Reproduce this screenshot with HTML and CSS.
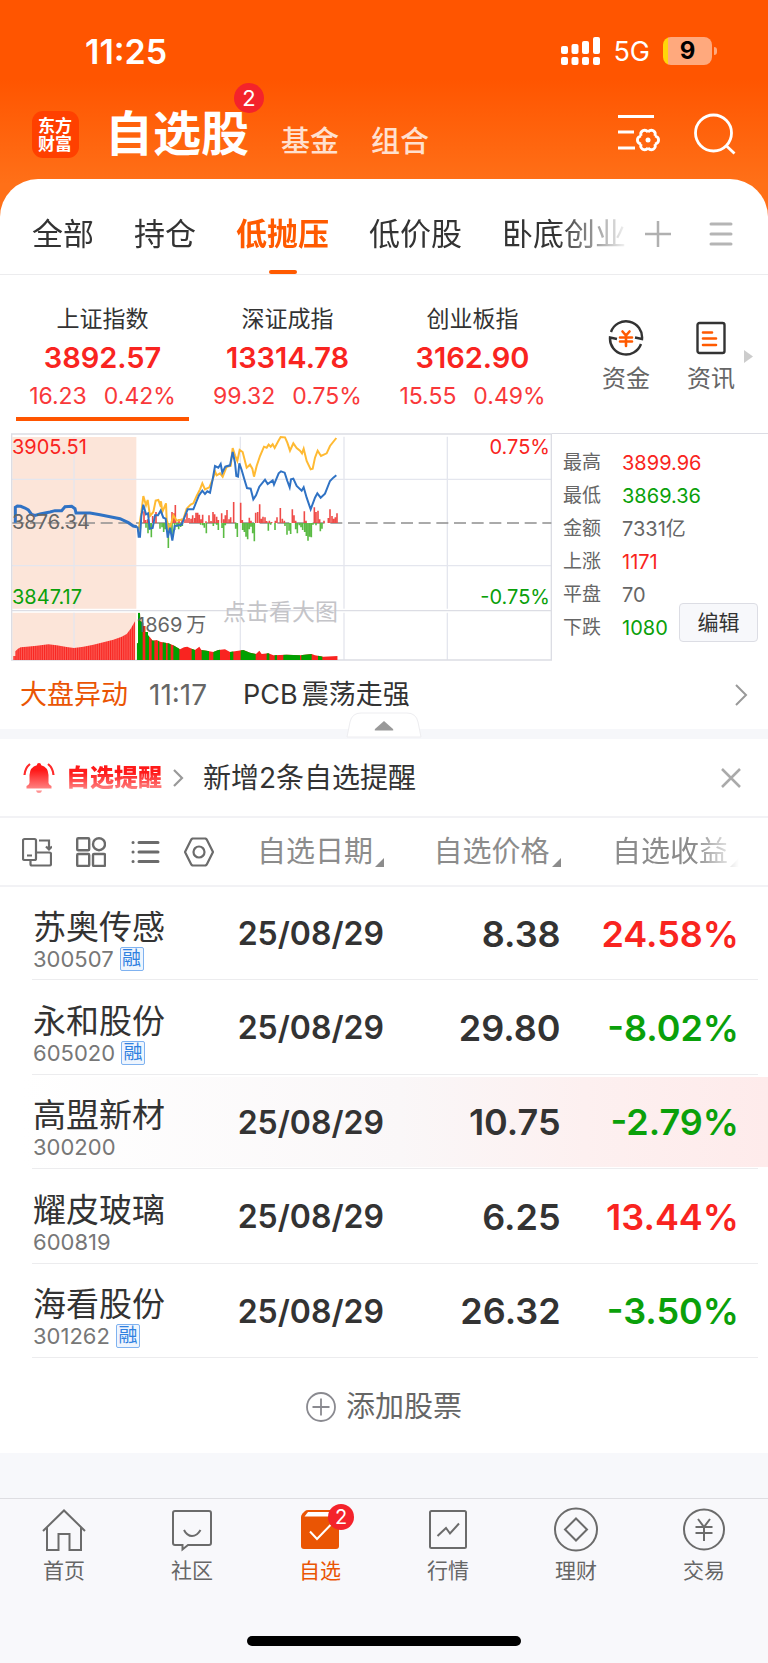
FILE: index.html
```html
<!DOCTYPE html>
<html lang="zh-CN">
<head>
<meta charset="utf-8">
<meta name="viewport" content="width=device-width, initial-scale=1">
<title>自选股</title>
<link rel="stylesheet" href="styles.css">
</head>
<body>
<div class="app">
  <header class="top">
    <div class="status">
      <span class="clock">11:25</span>
      <div class="status-right">
        <svg width="39" height="28" viewBox="0 0 39 28" fill="#fff" aria-hidden="true">
          <rect x="0" y="9" width="7" height="8" rx="2"/><rect x="10.500" y="7" width="7" height="10" rx="2"/><rect x="21" y="4" width="7" height="13" rx="2"/><rect x="32" y="0" width="7" height="17" rx="2"/>
          <rect x="0" y="20" width="7" height="8" rx="2"/><rect x="10.500" y="20" width="7" height="8" rx="2"/><rect x="21" y="20" width="7" height="8" rx="2"/><rect x="32" y="20" width="7" height="8" rx="2"/>
        </svg>
        <span class="net">5G</span>
        <span class="battery"><span class="battery-level">9</span></span>
      </div>
    </div>
    <div class="titlebar">
      <div class="logo">东方财富</div>
      <nav class="sections">
        <h1 class="title">自选股<span class="badge title-badge">2</span></h1>
        <a class="section" href="#fund">基金</a>
        <a class="section" href="#combo">组合</a>
      </nav>
      <button class="icon-btn" aria-label="设置">
        <svg width="42" height="40" viewBox="0 0 42 40" fill="none" stroke="#fff" stroke-width="2.800">
          <defs><path id="lobe" d="M36.900 22C39.500 22.500 40.600 24 40.600 26S39.500 29.500 36.900 30"/></defs>
          <path d="M0 2.500H36M0 18H16M0 34H17"/>
          <use href="#lobe"/><use href="#lobe" transform="rotate(60 30 26)"/><use href="#lobe" transform="rotate(120 30 26)"/><use href="#lobe" transform="rotate(180 30 26)"/><use href="#lobe" transform="rotate(240 30 26)"/><use href="#lobe" transform="rotate(300 30 26)"/>
          <circle cx="30" cy="26" r="2.500" fill="#fff" stroke="none"/>
        </svg>
      </button>
      <button class="icon-btn" aria-label="搜索">
        <svg width="42" height="42" viewBox="0 0 42 42" fill="none" stroke="#fff" stroke-width="2.800"><circle cx="19.500" cy="20" r="18"/><path d="M32 32.500l8.500 8"/></svg>
      </button>
    </div>
  </header>

  <main class="sheet">
    <div class="tabs">
      <div class="tab-list">
        <button class="tab">全部</button>
        <button class="tab">持仓</button>
        <button class="tab tab-active">低抛压</button>
        <button class="tab">低价股</button>
        <button class="tab">卧底创业</button>
      </div>
      <button class="icon-btn" aria-label="添加分组"><svg width="26" height="26" viewBox="0 0 26 26" fill="none" stroke="#b0b0b0" stroke-width="2.500"><path d="M13 0V26M0 13H26"/></svg></button>
      <button class="icon-btn" aria-label="分组管理"><svg width="24" height="26" viewBox="0 0 24 26" fill="none" stroke="#b5b5b5" stroke-width="3" stroke-linecap="round"><path d="M2 3H22M2 13H22M2 23H22"/></svg></button>
    </div>

    <section class="indices">
      <button class="index index-active"><span class="index-name">上证指数</span><span class="index-value">3892.57</span><span class="index-change"><span>16.23</span><span>0.42%</span></span></button>
      <button class="index"><span class="index-name">深证成指</span><span class="index-value">13314.78</span><span class="index-change"><span>99.32</span><span>0.75%</span></span></button>
      <button class="index"><span class="index-name">创业板指</span><span class="index-value">3162.90</span><span class="index-change"><span>15.55</span><span>0.49%</span></span></button>
      <div class="shortcuts">
        <a class="shortcut" href="#money">
          <svg width="36" height="36" viewBox="0 0 36 36" fill="none" stroke="#333" stroke-width="2.400"><path d="M3 12A16 16 0 0 1 34 19L27 17.500M33 24A16 16 0 0 1 2 17.500L9 19"/><path d="M14.500 11.500L18 15.500 21.500 11.500M12 17.500H24M12 21.500H24M18 16V26" stroke="#ff5a00" stroke-width="2.600" stroke-linecap="round"/></svg>
          资金
        </a>
        <a class="shortcut" href="#news">
          <svg width="36" height="36" viewBox="0 0 36 36" fill="none" stroke="#333" stroke-width="2.400"><rect x="4.500" y="3" width="27" height="30" rx="2"/><path d="M10 12.500H19M10 18.500H23M10 25H23" stroke="#ff5a00" stroke-width="2.600" stroke-linecap="round"/></svg>
          资讯
        </a>
        <svg class="more" width="9" height="13" viewBox="0 0 9 13" aria-hidden="true"><path d="M0 0L9 6.500 0 13z" fill="#ccc"/></svg>
      </div>
    </section>

    <section class="market">
      <svg class="chart" viewBox="0 0 541 228" role="img" aria-label="上证指数分时图">
        <svg width="541" height="228" viewBox="33 21 1623 684" preserveAspectRatio="none" fill="none">
          <defs>
            <pattern id="bars" width="5.500" height="700" patternUnits="userSpaceOnUse"><rect width="4.700" height="700" fill="#f92420"/></pattern>
            <clipPath id="vol"><path d="M410 702V652H414V560H420L421 585 430 590V600H436V618H444V628L450 634 458 644 470 642 480 647 495 650 505 652 520 658 530 664 540 670 552 664 562 662 575 668 585 672 598 662 604 672 620 674 640 678 655 672 675 670 690 678 705 676 730 672 750 680 768 684 778 674 785 684 805 682 820 688 860 686 900 688 935 684 945 688 970 692 1013 690V702z"/></clipPath>
          </defs>
          <path d="M37 33H409V548H37zM37 560H409V702H37z" fill="#fce5d9"/>
          <path d="M222 32V548M721 32V548M1032 32V548M1342 32V548M222 560V702M721 560V702M1032 560V702M1342 560V702M35 160H1654M35 419H1654" stroke="#e4e6ee" stroke-width="4"/>
          <path d="M35 24H1654V702H35zM35 554H1654" stroke="#dcdde4" stroke-width="4"/>
          <path d="M37 291H1654" stroke="#8f8f8f" stroke-width="5" stroke-dasharray="36 17"/>
          <path d="M40 702V690H46V676L54 668 62 664 80 662 110 659 145 655 170 658 200 663 222 666 250 662 280 656 310 649 340 641 365 632 380 624 392 608 405 586V702z" fill="url(#bars)"/>
          <g clip-path="url(#vol)">
            <path d="M410 555H1014V702H410z" fill="#f92420"/>
            <path d="M410 555H428V702H410zM436 555H447V702H436zM455 555H463V702H455zM474 555H478V702H474zM488 555H498V702H488zM503 555H512V702H503zM520 555H538V702H520zM575 555H585V702H575zM605 555H627V702H605zM640 555H660V702H640zM690 555H700V702H690zM722 555H767V702H722zM800 555H808V702H800zM824 555H831V702H824zM850 555H900V702H850zM904 555H935V702H904zM954 555H967V702H954z" fill="#00a000"/>
          </g>
          <path d="M432 291V256M437 291V282M443 291V280M458 291V270M468 291V258M516 291V258M521 291V262M526 291V237M537 291V280M546 291V278M555 291V280M561 291V262M567 291V276M573 291V278M578 291V268M584 291V276M588 291V260M593 291V260M598 291V266M603 291V280M608 291V266M618 291V286M627 291V268M633 291V285M639 291V258M644 291V265M650 291V272M655 291V282M665 291V262M671 291V280M676 291V268M681 291V252M687 291V280M692 291V274M701 291V228M722 291V230M727 291V282M748 291V275M753 291V284M767 291V260M773 291V258M779 291V235M784 291V278M789 291V272M795 291V274M800 291V285M808 291V284M815 291V288M826 291V284M831 291V274M841 291V246M847 291V278M853 291V284M877 291V250M882 291V268M887 291V284M913 291V256M918 291V284M943 291V244M948 291V258M954 291V254M959 291V280M972 291V284M985 291V276M990 291V250M996 291V270M1001 291V278M1006 291V274M1011 291V262" stroke="#ef4b48" stroke-width="4.800"/>
          <path d="M421 291V308M438 291V305M444 291V322M449 291V310M454 291V334M480 291V308M486 291V304M491 291V318M496 291V310M505 291V366M511 291V320M516 291V330M524 291V312M531 291V302M536 291V310M542 291V303M547 291V300M602 291V296M608 291V298M613 291V305M619 291V322M640 291V300M650 291V296M655 291V312M666 291V306M671 291V336M676 291V298M707 291V308M712 291V333M728 291V312M733 291V318M738 291V332M743 291V340M748 291V310M753 291V302M758 291V322M763 291V346M805 291V314M812 291V296M825 291V312M855 291V300M861 291V326M867 291V314M872 291V324M887 291V310M892 291V322M898 291V298M903 291V304M908 291V312M914 291V318M919 291V330M924 291V344M929 291V332M934 291V334M939 291V296M948 291V298M961 291V316M966 291V308" stroke="#5abb43" stroke-width="4.800"/>
          <path d="M415 318L424 260 430 210 438 238 443 222 450 270 460 258 467 224 475 222 480 236 483 226 487 258 498 232 500 280 508 314 520 268 530 284 550 280 560 248 572 236 580 232 590 210 600 190 607 172 615 190 628 184 638 160 646 138 650 148 660 142 668 152 680 122 692 120 698 66 705 88 712 105 719 72 728 78 740 125 750 116 757 128 762 152 770 120 780 90 792 62 800 65 806 56 812 62 818 55 824 66 835 45 842 33 855 34 862 50 870 74 880 52 890 66 900 74 906 82 911 68 920 105 932 130 938 128 945 95 953 74 963 90 980 82 990 60 1009 36" stroke="#ffba33" stroke-width="6"/>
          <path d="M46 290V244L52 240 62 241 75 246 85 252 95 265 105 268 120 264 135 261 150 258 165 254 185 254 195 242 215 241 225 248 228 261 270 261 300 266 330 272 360 278 385 290 400 300 410 302" stroke="#2f72c4" stroke-width="9"/>
          <path d="M408 302L413 304 416 332H420L424 270 430 236 438 265 444 262 449 308 458 306 465 268 474 268 482 254 490 275 497 278 503 335 510 305 517 344 524 300 545 296 555 270 563 250 580 250 590 225 597 208 607 194 615 204 622 196 630 200 638 160 645 120 655 125 662 114 667 140 676 122 690 118 698 78 705 110 709 150 714 152 718 112 725 132 733 160 741 186 752 188 760 220 768 208 778 182 795 161 803 174 818 163 822 176 836 142 843 136 854 140 862 165 869 184 873 160 880 158 890 180 905 194 911 184 920 215 932 250 945 215 952 202 962 215 975 203 990 165 1000 155 1009 148" stroke="#2f72c4" stroke-width="6"/>
        </svg>
        <text class="t-red" x="1" y="21">3905.51</text>
        <text class="t-gray" x="1" y="96">3876.34</text>
        <text class="t-green" x="1" y="171">3847.17</text>
        <text class="t-red" x="539" y="21" text-anchor="end">0.75%</text>
        <text class="t-green" x="539" y="171" text-anchor="end">-0.75%</text>
        <text class="t-gray" x="126" y="199">1869<tspan dx="4">万</tspan></text>
        <text class="t-mark" x="212" y="187">点击看大图</text>
      </svg>
      <div class="stats">
        <dl class="stat-list">
          <dt>最高</dt><dd class="up">3899.96</dd>
          <dt>最低</dt><dd class="down">3869.36</dd>
          <dt>金额</dt><dd>7331亿</dd>
          <dt>上涨</dt><dd class="up">1171</dd>
          <dt>平盘</dt><dd>70</dd>
          <dt>下跌</dt><dd class="down">1080</dd>
        </dl>
        <button class="edit">编辑</button>
      </div>
    </section>

    <a class="flash" href="#flash">
      <span class="flash-tag">大盘异动</span><time class="flash-time">11:17</time><span class="flash-text"><span>PCB</span><span>震荡走强</span></span>
      <svg width="14" height="22" viewBox="0 0 14 22" fill="none" stroke="#999" stroke-width="2"><path d="M2 1L12 11 2 21"/></svg>
    </a>
    <div class="band">
      <button class="collapse" aria-label="收起">
        <svg width="76" height="26" viewBox="0 0 76 26"><path d="M1 25L4 10Q6 1 15 1H61Q70 1 72 10L75 25z" fill="#fff" stroke="#ededf0"/><path d="M38 9l9 8q1 1.500-.5 1.500h-17q-1.500 0-.5-1.500z" fill="#999"/></svg>
      </button>
    </div>

    <section class="notice">
      <svg width="32" height="32" viewBox="0 0 32 32" aria-hidden="true">
        <defs><linearGradient id="bell" x2="0" y2="1"><stop offset=".25" stop-color="#ff1a1a"/><stop offset="1" stop-color="#ff9a9a"/></linearGradient></defs>
        <path d="M16 1q2 0 2.200 2.300Q25 5 25.500 13v8q.5 2 3 3v2.500H3.500V24q2.500-1 3-3v-8Q7 5 13.800 3.300 14 1 16 1zM13 28.500h6q-.5 2.500-3 2.500t-3-2.500z" fill="url(#bell)"/>
        <path d="M1.500 13Q2 6 7 2M30.500 13Q30 6 25 2" fill="none" stroke="#ff2a2a" stroke-width="2.200"/>
      </svg>
      <a class="notice-link" href="#alerts">自选提醒</a>
      <svg width="12" height="18" viewBox="0 0 12 18" fill="none" stroke="#999" stroke-width="2.200" aria-hidden="true"><path d="M2 1L10 9 2 17"/></svg>
      <span class="notice-text">新增2条自选提醒</span>
      <button class="icon-btn" aria-label="关闭"><svg width="20" height="20" viewBox="0 0 20 20" fill="none" stroke="#aaa" stroke-width="2.500"><path d="M1 1L19 19M19 1L1 19"/></svg></button>
    </section>

    <table class="stocks">
      <thead>
        <tr>
          <th class="col-name">
            <div class="tools">
              <button class="icon-btn" aria-label="横屏"><svg width="30" height="30" viewBox="0 0 30 30" fill="none" stroke="#6b6b6b" stroke-width="2.200"><rect x="1" y="2" width="13" height="21" rx="1.500"/><path d="M14 15.500H27.500Q29 15.500 29 17V27Q29 28.500 27.500 28.500H10Q8.500 28.500 8.500 27V23M5 18.500H10M17 3.500H27V12M24 9.500L27 12.500 30 9.500"/></svg></button>
              <button class="icon-btn" aria-label="宫格"><svg width="30" height="30" viewBox="0 0 30 30" fill="none" stroke="#6b6b6b" stroke-width="2.400"><rect x="1.200" y="1.200" width="12" height="12" rx="1"/><circle cx="23" cy="7.200" r="6"/><rect x="1.200" y="17" width="12" height="12" rx="1"/><rect x="17" y="17" width="12" height="12" rx="1"/></svg></button>
              <button class="icon-btn" aria-label="列表"><svg width="30" height="30" viewBox="0 0 30 30" fill="none" stroke="#6b6b6b" stroke-width="3" stroke-linecap="round"><path d="M9 5.500H28M9 15H28M9 24.500H28M3 5.500H3.100M3 15H3.100M3 24.500H3.100"/></svg></button>
              <button class="icon-btn" aria-label="表头设置"><svg width="30" height="30" viewBox="0 0 30 30" fill="none" stroke="#6b6b6b" stroke-width="2.200" stroke-linejoin="round"><path d="M8.500 1.500H21.500Q22.500 2 23 3L29 15 23 27Q22.500 28 21.500 28.500H8.500Q7.500 28 7 27L1 15 7 3Q7.500 2 8.500 1.500z"/><circle cx="15" cy="15" r="5.500"/></svg></button>
            </div>
          </th>
          <th class="col-date"><button class="sort">自选日期</button></th>
          <th class="col-price"><button class="sort">自选价格</button></th>
          <th class="col-gain"><button class="sort sort-fade">自选收益</button></th>
        </tr>
      </thead>
      <tbody>
        <tr><td><div class="name">苏奥传感</div><div class="code">300507<span class="margin-tag">融</span></div></td><td class="date">25/08/29</td><td class="num">8.38</td><td class="num up">24.58%</td></tr>
        <tr><td><div class="name">永和股份</div><div class="code">605020<span class="margin-tag">融</span></div></td><td class="date">25/08/29</td><td class="num">29.80</td><td class="num down">-8.02%</td></tr>
        <tr class="flashed"><td><div class="name">高盟新材</div><div class="code">300200</div></td><td class="date">25/08/29</td><td class="num">10.75</td><td class="num down">-2.79%</td></tr>
        <tr><td><div class="name">耀皮玻璃</div><div class="code">600819</div></td><td class="date">25/08/29</td><td class="num">6.25</td><td class="num up">13.44%</td></tr>
        <tr><td><div class="name">海看股份</div><div class="code">301262<span class="margin-tag">融</span></div></td><td class="date">25/08/29</td><td class="num">26.32</td><td class="num down">-3.50%</td></tr>
      </tbody>
    </table>
    <button class="add">
      <svg width="30" height="30" viewBox="0 0 30 30" fill="none" stroke="#8a8a90" stroke-width="1.800"><circle cx="15" cy="15" r="14"/><path d="M15 6.500V23.500M6.500 15H23.500"/></svg>
      添加股票
    </button>
  </main>

  <footer class="bottom">
    <nav class="nav">
      <a class="nav-item" href="#home"><svg width="46" height="46" viewBox="0 0 46 46" fill="none" stroke="#6b6b6b" stroke-width="2"><path d="M2 24L23 3.500 44 24M6 20.500V43H17.500V27H28.500V43H40V20.500"/></svg>首页</a>
      <a class="nav-item" href="#community"><svg width="46" height="46" viewBox="0 0 46 46" fill="none" stroke="#6b6b6b" stroke-width="2"><path d="M6 4H40Q42 4 42 6V36Q42 38 40 38H19L13.500 42.500V38H6Q4 38 4 36V6Q4 4 6 4z"/><path d="M15 23Q18 29 23 29T31.500 23"/></svg>社区</a>
      <a class="nav-item nav-active" href="#watch"><svg width="46" height="46" viewBox="0 0 46 46" fill="none"><path d="M11 3H39Q42 3 42 6V39Q42 42 39 42H7Q4 42 4 39V10Q4 8 5.500 6.500L8 4Q9 3 11 3z" fill="#ea5504"/><path d="M11 5H37L34 9.500H7.500z" fill="#fff"/><path d="M13 24.500L20 32 33.500 18" stroke="#fff" stroke-width="2"/></svg><span class="badge nav-badge">2</span>自选</a>
      <a class="nav-item" href="#quotes"><svg width="46" height="46" viewBox="0 0 46 46" fill="none" stroke="#6b6b6b" stroke-width="2"><rect x="5" y="4" width="36" height="37" rx="1.500"/><path d="M12.500 29L21 21 25 26.500 34 16.500"/></svg>行情</a>
      <a class="nav-item" href="#wealth"><svg width="46" height="46" viewBox="0 0 46 46" fill="none" stroke="#6b6b6b" stroke-width="2"><circle cx="23" cy="22.500" r="21"/><path d="M23 11.500L34 22.500 23 33.500 12 22.500z"/></svg>理财</a>
      <a class="nav-item" href="#trade"><svg width="46" height="46" viewBox="0 0 46 46" fill="none" stroke="#6b6b6b" stroke-width="2"><circle cx="23" cy="22.500" r="20"/><path d="M17 12L23 20 29 12M14.500 20H31.500M14.500 26H31.500M23 20V34"/></svg>交易</a>
    </nav>
    <div class="home-bar"></div>
  </footer>
</div>
</body>
</html>
```
FILE: styles.css
```css
* { box-sizing: border-box; }
body {
  margin: 0;
  font-family: "Inter", "Noto Sans CJK SC", sans-serif;
  color: #333;
  background: #f7f8fb;
}
button { margin: 0; padding: 0; border: 0; background: none; font: inherit; color: inherit; cursor: pointer; }
a { color: inherit; text-decoration: none; }
svg { display: block; flex: none; }
.icon-btn { display: block; flex: none; }
.app { display: flex; flex-direction: column; min-height: 100vh; }
.up { color: #f92420; }
.down { color: #0aa00a; }

.top {
  padding: 0 32px 53px;
  margin-bottom: -40px;
  background: linear-gradient(#ff5500 36%, #ff7018 84%);
  color: #fff;
}
.status { display: flex; justify-content: space-between; align-items: center; height: 102px; padding: 0 24px 0 53px; }
.clock { font-size: 34px; font-weight: 600; }
.status-right { display: flex; align-items: center; gap: 13px; }
.net { font-size: 27px; }
.battery {
  position: relative;
  width: 49px;
  height: 28px;
  border-radius: 8px;
  background: linear-gradient(90deg, #ffd60a 5px, #ffa97d 5px);
}
.battery::after { content: ""; position: absolute; left: 51px; top: 10px; width: 3px; height: 8px; border-radius: 0 3px 3px 0; background: #ffa97d; }
.battery-level { display: block; text-align: center; font-size: 24px; line-height: 28px; font-weight: 700; color: #000; }

.titlebar { display: flex; align-items: center; height: 64px; gap: 34px; }
.logo {
  width: 47px;
  height: 47px;
  padding: 6px;
  border-radius: 11px;
  background: #ff4000;
  font-size: 17px;
  line-height: 18px;
  font-weight: 700;
}
.sections { display: flex; align-items: center; flex: 1; gap: 32px; margin-left: -8px; }
.title { position: relative; margin: 0; font-size: 48px; line-height: 64px; font-weight: 600; }
.section { padding-top: 16px; font-size: 29px; line-height: 40px; font-weight: 500; color: #ffe0cf; }
.badge { position: absolute; border-radius: 50%; background: #f4232b; color: #fff; text-align: center; font-weight: 400; }
.title-badge { top: -19px; right: -15px; width: 30px; height: 30px; font-size: 22px; line-height: 30px; }

.sheet { background: #fff; border-radius: 38px 38px 0 0; }
.tabs { display: flex; align-items: center; height: 96px; padding: 0 35px 0 32px; border-bottom: 1px solid #ececee; }
.tabs .icon-btn { padding-top: 14px; }
.tabs .icon-btn + .icon-btn { margin-left: 38px; }
.tab-list {
  display: flex;
  flex: 1;
  gap: 40px;
  margin-right: 15px;
  overflow: hidden;
  white-space: nowrap;
  -webkit-mask-image: linear-gradient(90deg, #000 88%, transparent);
  mask-image: linear-gradient(90deg, #000 88%, transparent);
}
.tab { position: relative; flex: none; height: 95px; padding-top: 14px; font-size: 31px; line-height: 46px; }
.tab-active { color: #ff5a00; font-weight: 600; }
.tab-active::after { content: ""; position: absolute; left: 50%; bottom: 0; width: 28px; height: 4px; margin-left: -14px; border-radius: 2px; background: #ff5a00; }

.indices { display: grid; grid-template-columns: 185fr 185fr 185fr 188fr; height: 158px; padding: 24px 15px 12px 10px; }
.index { display: flex; flex-direction: column; align-items: center; margin: 0 6px; border-bottom: 4px solid transparent; white-space: nowrap; }
.index-active { border-color: #ff5500; }
.index-name { font-size: 23px; line-height: 40px; }
.index-value { font-size: 29px; line-height: 38px; font-weight: 600; color: #f92420; }
.index-change { display: flex; gap: 17px; font-size: 23px; line-height: 38px; color: #f9383a; }
.shortcuts { display: flex; min-width: 0; align-items: flex-start; justify-content: flex-end; }
.shortcut { display: flex; flex-direction: column; align-items: center; padding-top: 21px; font-size: 24px; line-height: 46px; color: #666; white-space: nowrap; }
.shortcut + .shortcut { margin-left: 37px; }
.more { margin: 51px 0 0 9px; }

.market { display: grid; grid-template-columns: 541fr 216fr; margin-left: 11px; }
.chart { width: 100%; font-size: 20px; }
.t-red { fill: #f92420; }
.t-green { fill: #0aa00a; }
.t-gray { fill: #666; }
.t-mark { fill: #c4c4c8; font-size: 23px; }
.stats { position: relative; min-width: 0; padding: 12px 0 0 11px; border-top: 1px solid #dcdde4; }
.stat-list { display: grid; grid-template-columns: 59px 1fr; grid-auto-rows: 33px; row-gap: 0; margin: 0; font-size: 19px; line-height: 34px; color: #666; }
.stat-list dd { margin: 0; font-size: 20px; }
.stat-list .up { color: #f92420; }
.stat-list .down { color: #0aa00a; }
.edit { position: absolute; right: 10px; bottom: 19px; width: 79px; height: 39px; border: 1px solid #dcdde4; border-radius: 4px; background: #f7f8fb; font-size: 21px; line-height: 36px; }

.flash { display: flex; align-items: center; height: 68px; padding: 0 20px; font-size: 27px; line-height: 40px; }
.flash-tag { color: #ea5504; }
.flash-time { margin: 0 36px 0 21px; font-size: 28px; color: #666; }
.flash-text { display: flex; flex: 1; gap: 4px; }
.band { position: relative; height: 10px; background: #f6f7fa; }
.collapse { position: absolute; bottom: 1px; left: 50%; margin-left: -38px; }

.notice { display: flex; align-items: center; height: 79px; padding: 0 27px 0 23px; border-bottom: 2px solid #f2f2f5; }
.notice-link {
  margin: 0 10px 0 11px;
  font-size: 24px;
  line-height: 36px;
  font-weight: 800;
  color: transparent;
  background: linear-gradient(#ff1a1a 35%, #ff8a8a 85%);
  -webkit-background-clip: text;
  background-clip: text;
}
.notice-text { flex: 1; margin-left: 19px; font-size: 28px; line-height: 40px; }

.stocks { width: 100%; border-collapse: collapse; table-layout: fixed; }
.stocks th, .stocks td { padding: 0; text-align: right; white-space: nowrap; }
.stocks th { height: 68px; border-bottom: 2px solid #f2f2f5; font-weight: 400; }
.col-name { width: 29%; }
.col-date { width: 21%; }
.col-price { width: 23%; }
.col-gain { width: 27%; }
.tools { display: flex; gap: 24px; padding-left: 22px; }
.sort { position: relative; padding-right: 11px; font-size: 29px; line-height: 42px; color: #8c8c8c; }
.sort::after { content: ""; position: absolute; right: 0; bottom: 6px; border-style: solid; border-width: 0 0 9px 9px; border-color: transparent transparent #8c8c8c; }
.sort-fade { -webkit-mask-image: linear-gradient(90deg, #000 65%, transparent); mask-image: linear-gradient(90deg, #000 65%, transparent); }
.stocks th:last-child, .stocks td:last-child { padding-right: 29px; }
.stocks td { height: 94px; vertical-align: middle; }
.stocks tr:nth-child(even) td { height: 95px; }
.stocks td:first-child { padding: 12px 0 0 33px; text-align: left; }
.stocks tbody tr { background: linear-gradient(#ececee, #ececee) no-repeat 32px 100% / calc(100% - 42px) 1px; }
.stocks tbody .flashed {
  background:
    linear-gradient(#ececee, #ececee) no-repeat 32px 100% / calc(100% - 42px) 1px,
    linear-gradient(90deg, #fff 3%, #faf7f8 52%, #fdf0f0 76%, #feebeb) no-repeat 0 2px / 100% 90px;
}
.name { font-size: 33px; line-height: 38px; }
.code { display: flex; align-items: center; gap: 6px; font-size: 22px; line-height: 26px; color: #777; }
.margin-tag { width: 24px; height: 24px; border: 1px solid #7fb2f0; border-radius: 2px; background: #eef5fe; color: #2f80e0; font-size: 19px; line-height: 21px; text-align: center; }
.date { font-size: 32px; font-weight: 600; }
.num { font-size: 36px; font-weight: 600; }

.add { display: flex; justify-content: center; align-items: center; gap: 10px; width: 100%; height: 95px; padding-top: 3px; font-size: 29px; line-height: 42px; color: #666; }

.bottom { margin-top: auto; padding-bottom: 17px; border-top: 1px solid #dedee2; background: #f8f8fb; }
.nav { display: flex; }
.nav-item { position: relative; display: flex; flex: 1; flex-direction: column; align-items: center; padding-top: 8px; font-size: 21px; line-height: 36px; color: #666; }
.nav-active { color: #ea5504; }
.nav-badge { top: 5px; left: 50%; width: 26px; height: 26px; margin-left: 8px; font-size: 20px; line-height: 26px; }
.home-bar { width: 274px; height: 10px; margin: 47px auto 0; border-radius: 5px; background: #000; }
```
